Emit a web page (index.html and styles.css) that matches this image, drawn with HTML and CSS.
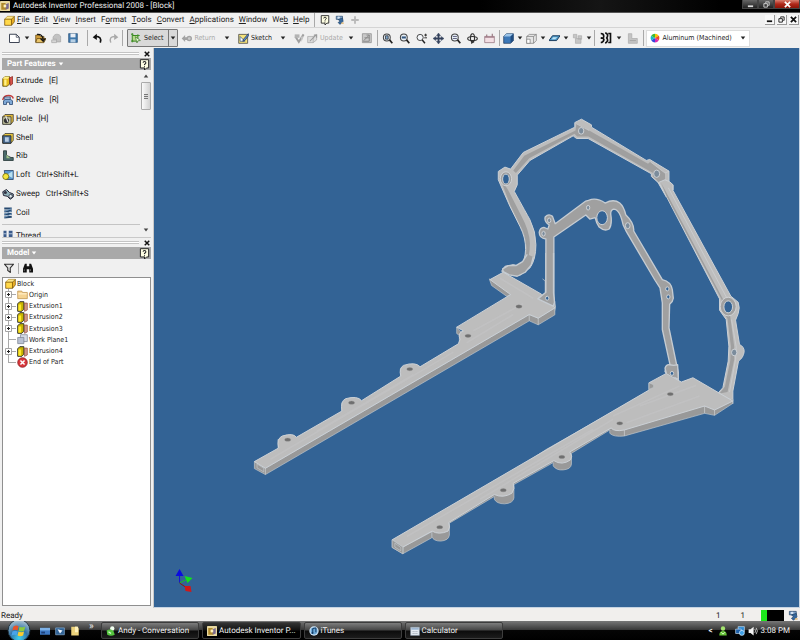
FILE: index.html
```
<!DOCTYPE html>
<html lang="en">
<head>
<meta charset="utf-8">
<title>Autodesk Inventor Professional 2008 - [Block]</title>
<link rel="stylesheet" href="styles.css">
</head>
<body>
<svg class="defs" aria-hidden="true">
  <symbol id="app" viewBox="0 0 16 16"><rect width="16" height="16" rx="1" fill="#e9d9a0"/><path d="M2 3h7v3H6v4h4v4H2z" fill="#b08a2c"/><path d="M9 5l5-2v9l-5 2z" fill="#7b6a8c"/><path d="M6 6h4v4H6z" fill="#fff3b8"/></symbol>
  <symbol id="part" viewBox="0 0 16 16"><path d="M1 6l4-4h10v8l-4 5H1z" fill="#f0b429" stroke="#6b4a00"/><path d="M1 6l4-4h10l-4 4z" fill="#ffe98a"/><path d="M2 7h8v7H2z" fill="#ffd94a"/><path d="M1 6h10v9M11 6l4-4" fill="none" stroke="#6b4a00"/></symbol>
  <symbol id="help" viewBox="0 0 16 16"><path d="M2 1h12v12h-3l-3 3v-3H2z" fill="#ffffe4" stroke="#222" stroke-width="1.4"/><path d="M6 5.500q0-2 2-2t2 2q0 1-1.200 1.700T8 9M8 10.500v1.500" fill="none" stroke="#222" stroke-width="1.500"/></symbol>
  <symbol id="team" viewBox="0 0 16 16"><path d="M2 2h10v5H2z" fill="#7fa3c8" stroke="#1d3f63"/><circle cx="6" cy="4.500" r="2" fill="#d4e3f2"/><path d="M5 7l7-2 1 5-5 5-3-3 3-2z" fill="#35679c" stroke="#1d3f63"/><path d="M10 12h4v2h-4z" fill="#e0b46a"/></symbol>
  <symbol id="plus" viewBox="0 0 16 16"><path d="M8 2v12M2 8h12" stroke="#b9b9b9" stroke-width="3"/></symbol>
  <symbol id="new" viewBox="0 0 16 16"><path d="M2 3h9l4 4v7H2z" fill="#fff" stroke="#3b4252" stroke-width="1.300"/><path d="M11 3v4h4" fill="none" stroke="#3b4252"/></symbol>
  <symbol id="open" viewBox="0 0 16 16"><path d="M1 3h5l2 2h5v8H1z" fill="#cf9d3a" stroke="#5c4210"/><path d="M3 8h13l-3 6H1z" fill="#e9c46a" stroke="#5c4210"/><path d="M3 2q8-1 9 8M8 8l4 4 3-4" fill="none" stroke="#111" stroke-width="1.800"/></symbol>
  <symbol id="saveall" viewBox="0 0 16 16"><path d="M3 6q2-5 7-4t4 6v5H8V9H3z" fill="#c2c2c2" stroke="#a5a5a5"/><path d="M1 10h7v4H1z" fill="#d6d6d6" stroke="#a5a5a5"/></symbol>
  <symbol id="save" viewBox="0 0 16 16"><path d="M1 1h14v14H1z" fill="#3f78ab" stroke="#214a73"/><path d="M4 1h8v6H4z" fill="#e8eef5"/><path d="M4 10h8v5H4z" fill="#b6cfe4"/></symbol>
  <symbol id="undo" viewBox="0 0 16 16"><path d="M12 14q3-9-7-9" fill="none" stroke="#111" stroke-width="2.400"/><path d="M1 6l6-5v9z" fill="#111"/></symbol>
  <symbol id="redo" viewBox="0 0 16 16"><path d="M4 14Q1 5 10 5" fill="none" stroke="#a9a9a9" stroke-width="2"/><path d="M15 6L9 1v9z" fill="#a9a9a9"/></symbol>
  <symbol id="pick" viewBox="0 0 16 16"><path d="M2 4h9v9H2z" fill="#b6d98c" stroke="#3a8a22" stroke-width="1.600"/><path d="M0 2h4M2 0v4M11 2v3M14 4h-3M2 15v-4M0 13h4" stroke="#3a8a22" stroke-width="1.400"/><path d="M7 6l8 6-4 .5-1.500 3.500z" fill="#e9ffd6" stroke="#2e6b18"/></symbol>
  <symbol id="ret" viewBox="0 0 16 16"><path d="M1 8l5-5v3h3v4H6v3z" fill="#a4a4a4"/><circle cx="12" cy="8" r="3" fill="#ccc" stroke="#a4a4a4" stroke-width="2"/></symbol>
  <symbol id="sketch" viewBox="0 0 16 16"><path d="M1 2h13v13H1z" fill="#f5e27a" stroke="#333"/><path d="M3 12V5l7 7z" fill="#fff" stroke="#2a4e86"/><path d="M15 1L8 9l-1 3 3-1 6-8z" fill="#5b8ccb" stroke="#1a2c55"/></symbol>
  <symbol id="chk" viewBox="0 0 16 16"><path d="M2 5l5 8 7-11" fill="none" stroke="#a0a0a0" stroke-width="3"/><path d="M1 2h7v5H1z" fill="#b4b4b4"/><path d="M10 5h4l-3 8z" fill="#c4c4c4"/></symbol>
  <symbol id="upd" viewBox="0 0 16 16"><path d="M1 5h8v9H1zM9 5l5-3v8l-5 4" fill="#ddd" stroke="#a6a6a6"/><path d="M4 12L13 3M10 3h4v4" fill="none" stroke="#999" stroke-width="1.500"/></symbol>
  <symbol id="grid" viewBox="0 0 16 16"><path d="M2 1h13v13H2z" fill="#c9c9c9" stroke="#888"/><path d="M4 11L12 3M8 3h4v9H3M5 7h7" fill="none" stroke="#888" stroke-width="1.400"/></symbol>
  <symbol id="lens" viewBox="0 0 16 16"><circle cx="7" cy="6.500" r="5" fill="#e8f0f7" stroke="#444" stroke-width="1.500"/><path d="M11 10l4 5" stroke="#222" stroke-width="2.400"/></symbol>
  <symbol id="zall" viewBox="0 0 16 16"><use href="#lens"/><path d="M5 4h4v5H5z" fill="#7aa3cc" stroke="#222"/></symbol>
  <symbol id="zwin" viewBox="0 0 16 16"><use href="#lens"/><path d="M4 5h6v3H4z" fill="#32567f"/></symbol>
  <symbol id="zoom" viewBox="0 0 16 16"><circle cx="6" cy="6.500" r="4.500" fill="#f3f6fa" stroke="#444" stroke-width="1.400"/><path d="M9 10l4 5" stroke="#222" stroke-width="2.200"/><path d="M12 3h4M14 1v4M12 7h4" stroke="#222" stroke-width="1.300"/></symbol>
  <symbol id="pan" viewBox="0 0 16 16"><path d="M8 0l3 4H9v3h3V5l4 3-4 3V9H9v3h2l-3 4-3-4h2V9H4v2L0 8l4-3v2h3V4H5z" fill="#34425c" stroke="#34425c" stroke-width=".6"/></symbol>
  <symbol id="zsel" viewBox="0 0 16 16"><use href="#lens"/><path d="M4 5h6M4 8h6" stroke="#557" stroke-width="1.300"/></symbol>
  <symbol id="rot" viewBox="0 0 16 16"><ellipse cx="8" cy="8" rx="7" ry="3" fill="none" stroke="#333" stroke-width="1.600"/><ellipse cx="8" cy="7" rx="3" ry="6" fill="none" stroke="#333" stroke-width="1.600"/><path d="M6 11l5 2-5 3z" fill="#333"/></symbol>
  <symbol id="look" viewBox="0 0 16 16"><path d="M1 5h14v9H1z" fill="#f3dfe4" stroke="#8d6b74"/><path d="M1 5h14v2H1z" fill="#a88590"/><path d="M4 2v3M12 1v4" stroke="#8d6b74" stroke-width="1.500"/></symbol>
  <symbol id="cube" viewBox="0 0 16 16"><path d="M1 5l4-4h10v10l-4 4H1z" fill="#3c78b8" stroke="#1b3556"/><path d="M1 5l4-4h10l-4 4z" fill="#9cc4e8"/><path d="M11 5l4-4v10l-4 4z" fill="#1f4c80"/></symbol>
  <symbol id="box" viewBox="0 0 16 16"><path d="M1 5l4-3h10v9l-4 4H1z" fill="#e6e6e6" stroke="#777"/><path d="M1 5h10v10M11 5l4-3" fill="none" stroke="#777"/><path d="M1 9h5v6H1z" fill="#fff" stroke="#777"/></symbol>
  <symbol id="plane" viewBox="0 0 16 16"><path d="M5 4h11l-5 7H0z" fill="#4f9bcb" stroke="#193a5c" stroke-width="1.400"/><path d="M6 6h6l-3 3H4z" fill="#bfe4f5"/></symbol>
  <symbol id="comp" viewBox="0 0 16 16"><path d="M2 2h5v5H2zM9 4h5v5H9zM5 8h8v7H5z" fill="#c6c6c6" stroke="#aaa"/></symbol>
  <symbol id="waves" viewBox="0 0 16 16"><path d="M1 2q4 0 4 3.500T1 8q5 0 4 3t-4 3M7 1q5 2 2 7 3 4-2 7M11 2h3v12h-3" fill="none" stroke="#111" stroke-width="2.200"/></symbol>
  <symbol id="steps" viewBox="0 0 16 16"><path d="M2 1h5v7h8v7H2z" fill="#c4c4c4" stroke="#aaa"/><path d="M4 11h9" stroke="#999"/></symbol>
  <symbol id="wheel" viewBox="0 0 16 16"><path d="M8 8V1a7 7 0 0 1 6 3.500z" fill="#f6c700"/><path d="M8 8l6-3.500a7 7 0 0 1 0 7z" fill="#ef4a23"/><path d="M8 8l6 3.500A7 7 0 0 1 8 15z" fill="#d92bb0"/><path d="M8 8v7a7 7 0 0 1-6-3.500z" fill="#3548dc"/><path d="M8 8l-6 3.500a7 7 0 0 1 0-7z" fill="#18b8c9"/><path d="M8 8L2 4.500A7 7 0 0 1 8 1z" fill="#3fb82f"/></symbol>
  <symbol id="down" viewBox="0 0 8 8"><path d="M1 2h6L4 6z" fill="currentColor"/></symbol>
  <symbol id="up" viewBox="0 0 8 8"><path d="M1 6h6L4 2z" fill="currentColor"/></symbol>
  <symbol id="x" viewBox="0 0 8 8"><path d="M1 1l6 6M7 1L1 7" stroke="currentColor" stroke-width="2"/></symbol>
  <symbol id="min" viewBox="0 0 8 8"><path d="M1 6h6" stroke="currentColor" stroke-width="2"/></symbol>
  <symbol id="rest" viewBox="0 0 8 8"><path d="M3 2V1h4v4H6M1 3h4v4H1z" fill="none" stroke="currentColor"/></symbol>
  <symbol id="extrude" viewBox="0 0 16 16"><path d="M1 5l3-3h6v10l-3 3H1z" fill="#e8bd1c" stroke="#4d3d00"/><path d="M3 6h3v8H3z" fill="#fff08a"/><path d="M10 4l4-2v10l-3 2z" fill="#d9534a" stroke="#8a2a22"/><path d="M4 2h6L8 5H1z" fill="#fff08a"/></symbol>
  <symbol id="exttree" viewBox="0 0 16 16"><path d="M1 4l3-3h6v11l-3 3H1z" fill="#c9b400" stroke="#222" stroke-width="1.300"/><path d="M2 5h4v9H2z" fill="#ffe92e"/><path d="M11 3h4v10l-4 2z" fill="#d49a8b" stroke="#8d4a3c"/></symbol>
  <symbol id="revolve" viewBox="0 0 16 16"><path d="M1 8q1-6 8-6 5 0 6 4" fill="none" stroke="#c23b3b" stroke-width="2"/><path d="M2 9q6-5 12 0v5h-4v-3H6v3H2z" fill="#7fa9d6" stroke="#22406b"/><path d="M3 4h8v3H3z" fill="#b9cfe8" stroke="#22406b"/></symbol>
  <symbol id="hole" viewBox="0 0 16 16"><path d="M1 5l3-3h11v9l-3 4H1z" fill="#e0b93a" stroke="#333"/><path d="M1 5h11v10H1z" fill="#c9c9a0" stroke="#333"/><circle cx="6" cy="10" r="3.500" fill="#333"/><path d="M5 4l3 8" stroke="#e8e8e8" stroke-width="1.500"/></symbol>
  <symbol id="shell" viewBox="0 0 16 16"><path d="M1 5l3-3h11v9l-3 4H1z" fill="#e8c63d" stroke="#333"/><path d="M1 5h11v10H1z" fill="#47698f" stroke="#222"/><path d="M4 7h5v6H4z" fill="#b8cde4"/></symbol>
  <symbol id="rib" viewBox="0 0 16 16"><path d="M2 1h4v6l6 3h3v4H2z" fill="#4b6b6b" stroke="#1d2f2f"/><path d="M6 6l5 5H6z" fill="#9fc38a"/></symbol>
  <symbol id="loft" viewBox="0 0 16 16"><path d="M3 2h12v12H5z" fill="#5a96cd" stroke="#1d3b60"/><path d="M6 8l8-5v9z" fill="#b9e0f0"/><circle cx="5" cy="10" r="4" fill="#f4e53d" stroke="#6a6200"/></symbol>
  <symbol id="sweep" viewBox="0 0 16 16"><path d="M1 5l5-3 4 4 5 2v4l-4 3-4-4-5-1z" fill="#8fb0b8" stroke="#223" stroke-width="1.300"/><circle cx="4.500" cy="6" r="2" fill="#334"/><circle cx="11.500" cy="11" r="2.400" fill="#dfe9ec" stroke="#223"/></symbol>
  <symbol id="coil" viewBox="0 0 16 16"><path d="M3 2h10M3 6l10-1M3 10l10-1M3 14l10-1" stroke="#27496f" stroke-width="2.600"/><path d="M13 2L3 6M13 5L3 10M13 9L3 14" stroke="#6f98bf" stroke-width="1.200"/></symbol>
  <symbol id="thread" viewBox="0 0 16 16"><path d="M2 1h4v13H2zM9 1h5v13H9z" fill="#3a5a8a"/><path d="M2 5h4M9 5h5" stroke="#cfe0f5"/></symbol>
  <symbol id="filter" viewBox="0 0 16 16"><path d="M1 2h14l-5 6v7l-4-3V8z" fill="#e6e6e6" stroke="#333" stroke-width="1.800"/></symbol>
  <symbol id="find" viewBox="0 0 16 16"><path d="M3 1h3v4h4V1h3l3 8v6h-6v-5H6v5H0V9z" fill="#111"/><path d="M2 10v3M12 10v3" stroke="#999"/></symbol>
  <symbol id="folder" viewBox="0 0 16 16"><path d="M1 3h6l1 2h7v9H1z" fill="#f5d392" stroke="#b88a45"/><path d="M2 6h12v2H2z" fill="#ffebc0"/></symbol>
  <symbol id="wplane" viewBox="0 0 16 16"><path d="M5 1h10v10H5z" fill="#d6dce6" stroke="#777f8e"/><path d="M1 5h9v9H1z" fill="#b9c1d3" stroke="#777f8e"/></symbol>
  <symbol id="end" viewBox="0 0 16 16"><circle cx="8" cy="8" r="7" fill="#d9383c" stroke="#7d1518"/><path d="M5 5l6 6M11 5l-6 6" stroke="#fff" stroke-width="2.200"/></symbol>
  <symbol id="node" viewBox="0 0 11 7"><path d="M6 3.500h5" stroke="#aaa"/><path d="M.5.500h6v6h-6z" fill="#fff" stroke="#a4a4a4"/><path d="M2 3.500h3M3.500 2v3" stroke="#222"/></symbol>
  <symbol id="leaf" viewBox="0 0 11 7"><path d="M3 3.500h8" stroke="#aaa"/></symbol>
  <symbol id="desk" viewBox="0 0 16 16"><path d="M0 3h16v11H0z" fill="#3e79c4"/><path d="M0 3h16v4H0z" fill="#7eb1e6"/><path d="M2 9h6v3H2z" fill="#1c3e78"/></symbol>
  <symbol id="flip" viewBox="0 0 16 16"><path d="M1 3h14v11H1z" fill="#2f6296" stroke="#8fb6da"/><path d="M4 5l8 2-4 5z" fill="#eef6ff"/></symbol>
  <symbol id="notes" viewBox="0 0 16 16"><path d="M2 1h9l3 3v11H2z" fill="#ecd27b"/><path d="M8 1h5v9H8z" fill="#fff2bd"/></symbol>
  <symbol id="buddy" viewBox="0 0 16 16"><circle cx="8" cy="4" r="3.500" fill="#a4e36f"/><path d="M2 15q0-7 6-7t6 7z" fill="#64c036"/><path d="M5 10l3 3 3-3" fill="none" stroke="#e6ffd6" stroke-width="1.500"/></symbol>
  <symbol id="chat" viewBox="0 0 16 16"><circle cx="10" cy="4" r="3.500" fill="#f2fff0"/><path d="M1 7q6-3 11 1l2 6q-6 3-12 0z" fill="#55c43f"/><path d="M4 9l4 3" stroke="#d8ffd0" stroke-width="2"/></symbol>
  <symbol id="itunes" viewBox="0 0 16 16"><circle cx="8" cy="8" r="7.500" fill="#cfe2f2"/><circle cx="8" cy="8" r="5.500" fill="#6aa7d6"/><path d="M6 11V4l5-1v7" fill="none" stroke="#103a66" stroke-width="1.600"/><circle cx="5.500" cy="11" r="1.600" fill="#103a66"/></symbol>
  <symbol id="calc" viewBox="0 0 16 16"><path d="M1 2h14v13H1z" fill="#e8eef5" stroke="#8b9aab"/><path d="M2 3h12v3H2z" fill="#9db6d2"/><path d="M4 9h8M4 12h8" stroke="#7b8794" stroke-dasharray="2 1"/></symbol>
  <symbol id="net" viewBox="0 0 16 16"><path d="M5 1h10v8H5z" fill="#2e8ad4" stroke="#cfe6f8"/><path d="M1 5h9v7H1z" fill="#1d5fa8" stroke="#cfe6f8"/><circle cx="11" cy="11" r="4" fill="#3fa0e6" stroke="#e8f6ff"/></symbol>
  <symbol id="vol" viewBox="0 0 16 16"><path d="M1 5h3l5-4v14l-5-4H1z" fill="#f2f2f2"/><path d="M11 5q2 3 0 6M13 3q4 5 0 10" fill="none" stroke="#ddd" stroke-width="1.300"/></symbol>
</svg>

<header class="titlebar">
  <svg class="i10"><use href="#app"/></svg>
  <h1>Autodesk Inventor Professional 2008 - [Block]</h1>
  <div class="winbtns">
    <button aria-label="Minimize"><svg class="i7"><use href="#min"/></svg></button>
    <button aria-label="Restore"><svg class="i7"><use href="#rest"/></svg></button>
    <button class="close" aria-label="Close"><svg class="i7"><use href="#x"/></svg></button>
  </div>
</header>

<nav class="menubar">
  <svg class="i11"><use href="#part"/></svg>
  <button><u>F</u>ile</button><button><u>E</u>dit</button><button><u>V</u>iew</button><button><u>I</u>nsert</button><button>F<u>o</u>rmat</button><button><u>T</u>ools</button><button><u>C</u>onvert</button><button><u>A</u>pplications</button><button><u>W</u>indow</button><button>We<u>b</u></button><button><u>H</u>elp</button>
  <span class="sep"></span>
  <button aria-label="Help topics"><svg class="i10"><use href="#help"/></svg></button>
  <button aria-label="Team"><svg class="i10"><use href="#team"/></svg></button>
  <button aria-label="Add"><svg class="i10"><use href="#plus"/></svg></button>
  <div class="mdi">
    <button aria-label="Minimize document"><svg class="i7"><use href="#min"/></svg></button>
    <button aria-label="Restore document"><svg class="i7"><use href="#rest"/></svg></button>
    <button aria-label="Close document"><svg class="i7"><use href="#x"/></svg></button>
  </div>
</nav>

<div class="toolbar" role="toolbar" aria-label="Standard">
  <div class="tg file">
    <button class="ib" aria-label="New"><svg class="i12"><use href="#new"/></svg></button>
    <button class="dd" aria-label="New options"><svg class="i6"><use href="#down"/></svg></button>
    <button class="ib" aria-label="Open"><svg class="i11"><use href="#open"/></svg></button>
    <button class="ib" aria-label="Save all"><svg class="i11"><use href="#saveall"/></svg></button>
    <button class="ib" aria-label="Save"><svg class="i10"><use href="#save"/></svg></button>
  </div>
  <span class="sep"></span>
  <div class="tg">
    <button class="ib" aria-label="Undo"><svg class="i11"><use href="#undo"/></svg></button>
    <button class="ib" aria-label="Redo"><svg class="i11"><use href="#redo"/></svg></button>
  </div>
  <span class="sep"></span>
  <div class="tg pick">
    <button class="tb"><svg class="i10"><use href="#pick"/></svg>Select</button>
    <button class="dd" aria-label="Select options"><svg class="i6"><use href="#down"/></svg></button>
  </div>
  <div class="tg cmds">
    <button class="tb off"><svg class="i11"><use href="#ret"/></svg>Return</button>
    <button class="dd wide" aria-label="Return options"><svg class="i6"><use href="#down"/></svg></button>
    <button class="tb"><svg class="i11"><use href="#sketch"/></svg>Sketch</button>
    <button class="dd wide" aria-label="Sketch options"><svg class="i6"><use href="#down"/></svg></button>
    <button class="dd" aria-label="Finish"><svg class="i11"><use href="#chk"/></svg></button>
    <button class="tb off"><svg class="i11"><use href="#upd"/></svg>Update</button>
    <button class="dd" aria-label="Update options"><svg class="i6"><use href="#down"/></svg></button>
    <button class="ib" aria-label="Rebuild"><svg class="i11"><use href="#grid"/></svg></button>
  </div>
  <span class="sep"></span>
  <div class="tg views">
    <button class="ib" aria-label="Zoom all"><svg class="i11"><use href="#zall"/></svg></button>
    <button class="ib" aria-label="Zoom window"><svg class="i11"><use href="#zwin"/></svg></button>
    <button class="ib" aria-label="Zoom"><svg class="i11"><use href="#zoom"/></svg></button>
    <button class="ib" aria-label="Pan"><svg class="i11"><use href="#pan"/></svg></button>
    <button class="ib" aria-label="Zoom selected"><svg class="i11"><use href="#zsel"/></svg></button>
    <button class="ib" aria-label="Rotate"><svg class="i11"><use href="#rot"/></svg></button>
    <button class="ib" aria-label="Look at"><svg class="i11"><use href="#look"/></svg></button>
  </div>
  <span class="sep"></span>
  <div class="tg shade">
    <button class="ib" aria-label="Shaded"><svg class="i11"><use href="#cube"/></svg></button><button class="dd" aria-label="Shading options"><svg class="i6"><use href="#down"/></svg></button>
    <button class="ib" aria-label="Camera"><svg class="i11"><use href="#box"/></svg></button><button class="dd" aria-label="Camera options"><svg class="i6"><use href="#down"/></svg></button>
    <button class="ib" aria-label="Shadow"><svg class="i11"><use href="#plane"/></svg></button><button class="dd" aria-label="Shadow options"><svg class="i6"><use href="#down"/></svg></button>
    <button class="ib" aria-label="Component opacity"><svg class="i11"><use href="#comp"/></svg></button><button class="dd" aria-label="Opacity options"><svg class="i6"><use href="#down"/></svg></button>
  </div>
  <span class="sep"></span>
  <div class="tg analysis">
    <button class="ib" aria-label="Analysis"><svg class="i12"><use href="#waves"/></svg></button>
    <button class="dd" aria-label="Analysis options"><svg class="i6"><use href="#down"/></svg></button>
    <button class="ib" aria-label="Section"><svg class="i11"><use href="#steps"/></svg></button>
  </div>
  <span class="sep"></span>
  <label class="material">
    <svg class="i10"><use href="#wheel"/></svg>
    <select aria-label="Color"><option>Aluminum (Machined)</option></select>
    <svg class="i6"><use href="#down"/></svg>
  </label>
</div>

<main>
  <aside>
    <section class="panel">
      <div class="grip"><i></i><button aria-label="Close panel"><svg class="i6"><use href="#x"/></svg></button></div>
      <header><button>Part Features <svg class="i6"><use href="#down"/></svg></button><button aria-label="Panel help"><svg class="i11"><use href="#help"/></svg></button></header>
      <div class="features">
        <div class="list">
          <ul>
            <li><button><svg class="i12"><use href="#extrude"/></svg>Extrude<kbd>[E]</kbd></button></li>
            <li><button><svg class="i12"><use href="#revolve"/></svg>Revolve<kbd>[R]</kbd></button></li>
            <li><button><svg class="i12"><use href="#hole"/></svg>Hole<kbd>[H]</kbd></button></li>
            <li><button><svg class="i12"><use href="#shell"/></svg>Shell</button></li>
            <li><button><svg class="i12"><use href="#rib"/></svg>Rib</button></li>
            <li><button><svg class="i12"><use href="#loft"/></svg>Loft<kbd>Ctrl+Shift+L</kbd></button></li>
            <li><button><svg class="i12"><use href="#sweep"/></svg>Sweep<kbd>Ctrl+Shift+S</kbd></button></li>
            <li><button><svg class="i12"><use href="#coil"/></svg>Coil</button></li>
          </ul>
          <div class="more"><button><svg class="i12"><use href="#thread"/></svg>Thread</button></div>
        </div>
        <div class="scroll"><svg class="i6"><use href="#up"/></svg><div class="thumb"><i></i></div><svg class="i6"><use href="#down"/></svg></div>
      </div>
    </section>
    <section class="panel model">
      <div class="grip"><i></i><button aria-label="Close panel"><svg class="i6"><use href="#x"/></svg></button></div>
      <header><button>Model <svg class="i6"><use href="#down"/></svg></button><button aria-label="Panel help"><svg class="i11"><use href="#help"/></svg></button></header>
      <div class="tools"><button aria-label="Filter"><svg class="i10"><use href="#filter"/></svg></button><span class="sep"></span><button aria-label="Find"><svg class="i10"><use href="#find"/></svg></button></div>
      <div class="treebox">
        <ul class="tree">
          <li class="root"><svg class="i11"><use href="#part"/></svg>Block</li>
          <li><svg class="node"><use href="#node"/></svg><svg class="i11"><use href="#folder"/></svg>Origin</li>
          <li><svg class="node"><use href="#node"/></svg><svg class="i11"><use href="#exttree"/></svg>Extrusion1</li>
          <li><svg class="node"><use href="#node"/></svg><svg class="i11"><use href="#exttree"/></svg>Extrusion2</li>
          <li><svg class="node"><use href="#node"/></svg><svg class="i11"><use href="#exttree"/></svg>Extrusion3</li>
          <li><svg class="node"><use href="#leaf"/></svg><svg class="i11"><use href="#wplane"/></svg>Work Plane1</li>
          <li><svg class="node"><use href="#node"/></svg><svg class="i11"><use href="#exttree"/></svg>Extrusion4</li>
          <li class="last"><svg class="node"><use href="#leaf"/></svg><svg class="i11"><use href="#end"/></svg>End of Part</li>
        </ul>
      </div>
    </section>
  </aside>

  <div class="canvas">
    <svg viewBox="154 48 645 560" role="img" aria-label="Engine block gasket part">
      <!-- rear gasket, left arm -->
      <g transform="translate(480 110) scale(.33333)" stroke-linejoin="round">
        <path class="top" d="M55 185L75 172L92 178L130 128L285 52V38L305 28L335 45V52L500 152L510 149L568 184V220L580 226V240L560 262L535 218L515 200V192L325 86L290 86L280 78L150 152L112 196L112 225L103 245Q140 312 150 330Q168 366 168 405Q168 450 150 475L120 497L80 492L65 485L75 470L100 465L120 470Q136 454 137 420Q138 385 120 350L90 290L55 210Z"/>
        <path class="front" d="M100 182L133 138L287 62L290 42L312 52L328 62L505 162L512 156L556 190V228L540 220L520 200V190L326 80L292 80L284 72L148 145L108 190Z"/>
        <path class="front" d="M58 200L84 240L124 318Q148 362 150 400Q150 440 138 464L118 486L82 488L104 478L126 466Q142 440 139 408Q136 376 122 350L92 288Z"/>
        <ellipse class="ring" cx="78" cy="207" rx="17" ry="21"/>
        <ellipse class="hole" cx="78" cy="208" rx="10" ry="15"/>
        <ellipse class="bolt" cx="304" cy="63" rx="8" ry="10"/>
        <ellipse class="bolt" cx="531" cy="192" rx="9" ry="11"/>
        <path class="line" d="M290 42L328 62M512 156L556 190L568 184"/>
      </g>
      <!-- rear gasket, right arm -->
      <g transform="translate(440 260) scale(.33333)" stroke-linejoin="round">
        <path class="top" d="M657 -232L676 -240L690 -234L700 -225V-208L874 110L896 128Q902 145 896 162L888 182L900 255Q914 262 914 276Q912 294 897 305L880 395V425L850 410L833 404L850 385L866 305L868 260L860 180L840 152V118L675 -200Z"/>
        <path class="front" d="M664 -232L852 122L872 170L884 262L884 300L864 398L840 402L856 382L872 305L874 262L864 178L846 150V120L680 -192Z"/>
        <path class="line" d="M686 -216L860 112M876 180L890 262L888 300L870 398"/>
        <ellipse class="ring" cx="866" cy="141" rx="24" ry="28"/>
        <ellipse class="hole" cx="866" cy="142" rx="13" ry="18"/>
        <ellipse class="bolt" cx="884" cy="279" rx="8" ry="10"/>
      </g>
      <!-- front gasket -->
      <g transform="translate(480 110) scale(.33333)" stroke-linejoin="round">
        <path class="face" d="M198 388Q178 386 178 368Q180 354 192 353L204 358L208 346Q192 336 196 322Q206 310 218 320L226 342L318 274L326 272Q350 262 376 280Q402 266 420 280Q432 290 438 315Q464 340 462 364L548 510Q574 516 578 540L581 566Q580 576 570 584L568 655L596 790V830H576L570 806L556 786L560 772L572 770L548 660V580L541 535L526 512L440 366L430 345Q420 298 402 298Q392 300 393 314Q398 345 388 358Q374 366 358 352Q350 342 346 324L330 328L318 316L222 382V560L226 592L222 612L195 600L198 560Z"/>
        <ellipse class="hole" cx="367" cy="324" rx="16" ry="21"/>
        <ellipse class="bolt" cx="208" cy="332" rx="5" ry="7"/>
        <ellipse class="bolt" cx="191" cy="372" rx="5" ry="7"/>
        <ellipse class="bolt" cx="325" cy="294" rx="5" ry="7"/>
        <ellipse class="bolt" cx="444" cy="348" rx="7" ry="9"/>
        <ellipse class="hole" cx="563" cy="538" rx="5" ry="6"/>
        <ellipse class="hole" cx="566" cy="562" rx="5" ry="6"/>
      </g>
      <!-- left rail -->
      <g transform="translate(240 260) scale(.33333)" stroke-linejoin="round">
        <path class="side" d="M748 58L755 78L800 110L830 100ZM650 203V222L658 228V250L680 236ZM113 540V566L150 560ZM305 430V456L340 448ZM481 328V350L516 344Z"/>
        <path class="side" d="M42 607L75 627L868 165L895 176L945 145V166L895 196L868 184L75 646L42 628Z"/>
        <path class="top" d="M42 607L115 566Q108 538 126 530Q160 520 168 534L305 455Q300 426 316 418Q352 408 364 424L482 350Q476 326 490 318Q526 306 540 322L655 253L660 240Q652 220 670 214L650 203L812 105L750 60L790 38L905 104L945 145L895 176L868 165L75 627Z"/>
        <path class="grain" d="M90 600L640 278M680 250L820 165M700 214L850 132M780 56L880 116M230 516L520 346"/>
        <path class="line" d="M75 627V646M895 176V196M868 165V184"/>
        <path class="side" d="M50 614L70 627V638L50 626Z"/>
        <ellipse class="bore" cx="142" cy="541" rx="9" ry="5"/>
        <ellipse class="bore" cx="334" cy="430" rx="9" ry="5"/>
        <ellipse class="bore" cx="509" cy="329" rx="9" ry="5"/>
        <ellipse class="bore" cx="684" cy="229" rx="9" ry="5"/>
        <ellipse class="bore" cx="837" cy="141" rx="9" ry="5"/>
        <path class="face" d="M862 -16L848 6L828 18L805 18L788 28L790 36L808 46L832 50L856 38L874 16L880 -8"/>
        <path class="face" d="M918 -20V98L894 118L940 140L944 128L941 100V-20"/>
        <path class="line" d="M908 58L916 64V98"/>
        <ellipse class="hole" cx="922" cy="116" rx="5" ry="6"/>
      </g>
      <!-- right rail -->
      <g transform="translate(380 400) scale(.33333)" stroke-linejoin="round">
        <path class="side" d="M36 422L68 444L155 398V412Q160 426 182 426Q206 424 208 408V372L343 292V300Q350 314 374 314Q400 312 402 296V256L520 190V200Q530 214 550 212Q574 210 575 194V162L690 92V102Q702 114 734 110L975 42L1005 48L1060 12V0L800 -20L500 150L68 430V464L36 445Z"/>
        <path class="side" d="M68 444L155 398V416L68 464Z"/>
        <path class="top" d="M36 422L808 -28V-50L860 -78L905 -52L940 -65L1060 5L1005 32L975 20L734 92Q704 98 694 86L570 158Q580 172 572 182Q546 200 522 184L400 252Q406 268 396 282Q370 298 343 286L206 370Q212 384 204 396Q176 408 156 396L68 444Z"/>
        <path class="side" d="M808 -50L808 -30L822 -36V-44Z"/>
        <path class="grain" d="M80 412L640 90M300 300L700 60M700 50L900 -40M740 70L960 -10M780 20L950 -42"/>
        <path class="line" d="M68 444V464M734 92V110M975 20V42M1005 32V48M1060 5V14"/>
        <path class="side" d="M36 422L68 444V464L36 445Z"/>
        <path class="side" d="M44 432L62 445V455L44 444Z"/>
        <ellipse class="bore" cx="179" cy="384" rx="9" ry="5"/>
        <ellipse class="bore" cx="370" cy="273" rx="9" ry="5"/>
        <ellipse class="bore" cx="546" cy="173" rx="9" ry="5"/>
        <ellipse class="bore" cx="720" cy="72" rx="9" ry="5"/>
        <ellipse class="bore" cx="872" cy="-16" rx="9" ry="5"/>
        <path class="face" d="M860 -79L856 -94Q860 -106 870 -104L882 -102L894 -104L896 -60L884 -66"/>
        <ellipse class="hole" cx="877" cy="-78" rx="5" ry="6"/>
      </g>
      <!-- axis triad -->
      <path d="M179 584V575" stroke="#1414d8" stroke-width="1"/><path d="M175 577l4-7 4 7z" fill="#0a0ae0"/>
      <path d="M179 584l6-3" stroke="#17c41e" stroke-width="1"/><path d="M184 577l8 2-5 5z" fill="#12e01c"/>
      <path d="M179 584l6 4" stroke="#901010" stroke-width="1"/><path d="M184 587h6l1 6-6-1z" fill="#d01818"/>
    </svg>
  </div>
</main>

<div class="status"><span>Ready</span><span>1</span><span>1</span><meter class="mem" min="0" max="100" value="28" aria-label="Memory"></meter><svg class="i11"><use href="#team"/></svg></div>

<footer class="taskbar">
  <button class="orb" aria-label="Start"><svg viewBox="0 0 24 20"><defs><radialGradient id="og" cx=".5" cy=".85" r=".8"><stop offset="0" stop-color="#3fd0ee"/><stop offset=".5" stop-color="#2f74a8"/><stop offset="1" stop-color="#a9bfce"/></radialGradient></defs><circle cx="12" cy="10" r="11.500" fill="url(#og)" stroke="#1c2f3c"/><path d="M6 6q3-2 5.500-.5l-1 4.500Q8 8.500 5 10z" fill="#e8542a"/><path d="M12.500 6q3 1.500 6-.3l-1 4.500q-3 1.500-6 0z" fill="#8ccb3a"/><path d="M5 11q3-1.500 5.500 0l-1 4Q7 14 4 15.500z" fill="#4aa3e8"/><path d="M11.500 11q3 1.500 5.800 0l-1 4.300q-3 1.500-5.800 0z" fill="#fbcb2f"/></svg></button>
  <div class="quick"><button aria-label="Show desktop"><svg class="i10"><use href="#desk"/></svg></button><button aria-label="Switch windows"><svg class="i10"><use href="#flip"/></svg></button><button aria-label="Notes"><svg class="i10"><use href="#notes"/></svg></button></div>
  <span class="chev">»</span>
  <button class="task"><svg class="i10"><use href="#chat"/></svg>Andy - Conversation</button>
  <button class="task on"><svg class="i10"><use href="#app"/></svg>Autodesk Inventor P...</button>
  <button class="task"><svg class="i10"><use href="#itunes"/></svg>iTunes</button>
  <button class="task"><svg class="i10"><use href="#calc"/></svg>Calculator</button>
  <div class="tray"><b>&lt;</b><svg class="i10"><use href="#buddy"/></svg><svg class="i10 gap"><use href="#net"/></svg><svg class="i10"><use href="#vol"/></svg><time>3:08 PM</time></div>
</footer>
</body>
</html>
```
FILE: styles.css
```
* { box-sizing: border-box; }
body {
  margin: 0; height: 100vh; display: flex; flex-direction: column; overflow: hidden;
  background: #f0f0f0; color: #222; font: 8px/10px Roboto, "Liberation Sans", sans-serif;
  text-rendering: geometricPrecision;
}
button, select { font: inherit; color: inherit; background: none; border: 0; padding: 0; margin: 0; text-rendering: inherit; }
button { display: flex; align-items: center; justify-content: center; white-space: nowrap; }
ul { list-style: none; margin: 0; padding: 0; }
svg { flex: none; display: block; }
.defs { position: absolute; width: 0; height: 0; }
.i6 { width: 6px; height: 6px; }
.i7 { width: 7px; height: 7px; }
.i10 { width: 10px; height: 10px; }
.i11 { width: 11px; height: 11px; }
.i12 { width: 12px; height: 12px; }
.sep { flex: none; width: 1px; height: 14px; background: #a9a9a9; }

.titlebar { flex: none; height: 13px; display: flex; align-items: center; gap: 3px; background: linear-gradient(90deg, #000 60%, #151515 75%, #000 90%); color: #eee; border-bottom: 1px solid #555; }
.titlebar h1 { margin: 0; flex: 1; font-size: 8px; font-weight: 400; }
.winbtns { display: flex; align-self: flex-start; height: 9px; }
.winbtns button { width: 16px; height: 9px; color: #ddd; background: linear-gradient(#666, #222); border: 1px solid #444; border-top: 0; }
.winbtns .close { width: 26px; color: #fff; background: linear-gradient(#d88070, #b0281a 50%, #8a1408); }

.menubar { flex: none; height: 15px; display: flex; align-items: center; gap: 5px; padding: 0 1px 0 4px; border-bottom: 1px solid #d4d4d4; }
.menubar > svg { margin-right: -3px; }
.menubar u { text-underline-offset: 1px; }
.mdi { margin-left: auto; display: flex; gap: 2px; }
.mdi button { width: 10px; height: 10px; background: #f8f8f8; border-right: 1px solid #999; border-bottom: 1px solid #999; color: #111; }

.toolbar { flex: none; height: 20px; display: flex; align-items: center; font: 7px/10px "DejaVu Sans Condensed", "DejaVu Sans", sans-serif; }
.toolbar .sep { margin: 0 1px; height: 16px; }
.tg { display: flex; align-items: center; }
.ib { width: 16px; height: 16px; }
.dd { width: 9px; height: 16px; }
.wide { width: 16px; }
.tb { gap: 2px; height: 16px; }
.off { color: #a9a9a9; }
.file { width: 81px; padding-left: 6px; justify-content: space-between; margin-right: 5px; }
.pick { height: 18px; margin-left: 3px; border: 1px solid #777; background: #d9d9d9; border-radius: 1px; }
.pick .tb { padding: 0 5px 0 3px; gap: 3px; }
.pick .dd { border-left: 1px solid #777; }
.cmds { width: 198px; padding: 0 2px 0 3px; justify-content: space-between; }
.views .ib { width: 17px; }
.shade .ib { width: 14px; }
.analysis { width: 46px; justify-content: space-between; padding: 0 2px; }
.material { display: flex; align-items: center; gap: 2px; width: 104px; height: 17px; margin-left: 1px; padding: 0 3px; background: #fff; border: 1px solid #ddd; }
.material select { flex: 1; min-width: 0; appearance: none; }

main { flex: 1; min-height: 0; display: flex; }
aside { flex: none; width: 154px; display: flex; flex-direction: column; padding: 1px 2px 2px; border-right: 1px solid #c9c9c9; }
.panel { display: flex; flex-direction: column; }
.model { flex: 1; }
.grip { height: 9px; display: flex; align-items: center; gap: 3px; }
.grip i { flex: 1; height: 3px; border: solid #c4c4c4; border-width: 1px 0; background: #fff; }
.grip button { width: 9px; height: 9px; color: #111; }
.panel header { height: 12px; display: flex; align-items: center; justify-content: space-between; padding: 0 1px 0 5px; background: #a9a9a9; color: #fff; font-weight: 700; }
.panel header button { gap: 2px; }
.features { height: 168px; display: flex; border-bottom: 1px solid #c9c9c9; }
.list { flex: 1; overflow: hidden; }
.list ul { height: 152px; display: flex; flex-direction: column; padding-top: 2px; }
.list li { flex: 1; display: flex; }
.list button { gap: 2px; }
.list kbd { font: inherit; margin-left: 4px; }
.more { margin-top: 2px; padding-top: 5px; border-top: 1px solid #c4c4c4; }
.scroll { width: 11px; display: flex; flex-direction: column; align-items: center; padding: 3px 0 4px; color: #444; }
.thumb { width: 10px; height: 28px; margin: 3px 0 auto; border: 1px solid #aaa; border-radius: 1px; background: linear-gradient(90deg, #fafafa, #d2d2d2); display: flex; align-items: center; justify-content: center; }
.thumb i { width: 4px; height: 5px; border: solid #777; border-width: 1px 0; background: linear-gradient(#ddd 1px, #777 1px 2px, #ddd 2px); }
.tools { height: 18px; display: flex; align-items: center; gap: 4px; padding-left: 2px; }
.tools .sep { height: 11px; }
.treebox { flex: 1; background: #fff; border: 1px solid #8f8f8f; padding: 0 2px; font: 7px/8px "DejaVu Sans Condensed", "DejaVu Sans", sans-serif; }
.tree { height: 90px; display: flex; flex-direction: column; }
.tree li { flex: 1; display: flex; align-items: center; gap: 1px; background: linear-gradient(#aaa, #aaa) 3px 0 / 1px 100% no-repeat; }
.tree .root { background: none; }
.tree .last { background-size: 1px 50%; }
.node { width: 11px; height: 7px; }

.canvas { flex: 1; min-width: 0; background: #336395; border: solid #c5d3e2; border-width: 0 1px 1px 0; }
.canvas svg { width: 100%; height: 100%; }
.top { fill: #bdbdbd; stroke: #ccd1d6; stroke-width: 3; }
.side { fill: #999; stroke: #c3c8cd; stroke-width: 2; }
.front { fill: #9f9f9f; }
.face { fill: #a0a0a0; stroke: #c6ccd2; stroke-width: 4; }
.line { fill: none; stroke: #d0d3d6; stroke-width: 2; }
.grain { fill: none; stroke: #c6c6c8; stroke-width: 5; opacity: .5; }
.ring { fill: #a0a0a0; stroke: #d0d3d6; stroke-width: 3; }
.hole { fill: #336395; stroke: #cdd2d6; stroke-width: 3; }
.bolt { fill: #7b8c9c; stroke: #ced2d6; stroke-width: 3; }
.bore { fill: #6f6f6f; stroke: #8f8f8f; stroke-width: 1; }

.status { flex: none; height: 13px; display: flex; align-items: center; gap: 20px; padding: 2px 1px 0; background: #f1efed; }
.status > :first-child { flex: 1; }
.mem { appearance: none; width: 23px; height: 11px; margin: 0 -16px 0 -4px; background: #000; }
.mem::-webkit-meter-bar { background: #000; border: 0; border-radius: 0; height: 11px; }
.mem::-webkit-meter-optimum-value { background: #1ce61c; }

.taskbar { flex: none; height: 19px; display: flex; align-items: center; gap: 3px; padding: 0 10px 0 7px; color: #f2f2f2; background: linear-gradient(#777, #3a3a3a 45%, #050505 50%, #000); }
.orb svg { width: 24px; height: 19px; }
.quick { display: flex; gap: 5px; margin-left: 6px; }
.chev { width: 15px; padding-left: 6px; font-size: 10px; line-height: 8px; align-self: flex-start; padding-top: 2px; }
.task { flex: 0 1 98px; height: 17px; justify-content: flex-start; gap: 2px; padding: 0 4px; border: 1px solid #3d3d3d; border-radius: 2px; background: linear-gradient(#7d7d7d, #444 48%, #0c0c0c 52%, #1c1c1c); }
.on { background: linear-gradient(#333, #111 48%, #000 52%); }
.tray { margin-left: auto; display: flex; align-items: center; gap: 3px; }
.tray .gap { margin-left: 4px; }
.tray b { margin-right: 2px; }
```
